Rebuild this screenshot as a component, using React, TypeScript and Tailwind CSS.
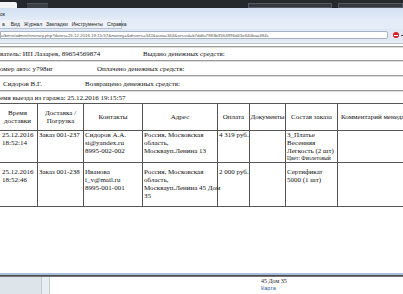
import React from "react";

const Line = () => (
  <div className="h-[2px] border-t border-[#9c9c9c] bg-[#dcdcdc]" />
);

const App: React.FC = () => {
  return (
    <div className="w-[403px] h-[294px] overflow-hidden bg-white flex flex-col font-['Liberation_Sans',sans-serif]">
      {/* dark top bar */}
      <div className="h-[8px] bg-[#25292e] flex items-end relative">
        <div className="w-[17px] h-[6px] bg-[#f2f4f6] rounded-tr-[2px]" />
        <div className="ml-[10px] w-[21px] h-[5px] bg-[#3c4148] border-t border-[#50565e]" />
        <div className="ml-[200px] w-[84px] h-[5px] bg-[#34383e] border border-[#555b63]" />
        <div className="ml-[6px] flex-1 h-[5px] bg-[#34383e] border border-[#555b63]" />
      </div>

      {/* title bar */}
      <div className="h-[12px] bg-gradient-to-b from-[#d3e1f1] to-[#e3ecf7] flex items-center">
        <span className="text-[5px] leading-[6px] text-[#222]">ок</span>
      </div>

      {/* menu */}
      <div className="h-[9px] bg-[#e3ecf7] flex">
        <div className="w-[122px] bg-[#eef2f8] border-r border-b border-[#b6c3d3] flex items-center gap-[4px] pl-[2px] text-[5px] leading-[6px] text-[#222] whitespace-nowrap">
          <span>а</span>
          <span className="ml-[2px]">Вид</span>
          <span>Журнал</span>
          <span>Закладки</span>
          <span>Инструменты</span>
          <span>Справка</span>
        </div>
      </div>

      {/* address bar */}
      <div className="h-[12px] bg-[#dfe8f3] flex items-center">
        <div className="w-[388px] h-[8px] bg-white border border-[#a5b3c4] rounded-r-[2px] flex items-center overflow-hidden">
          <span className="text-[4.4px] leading-[5px] text-[#555] whitespace-nowrap">
            u/bitrix/admin/itinerary.php?dates=25.12.2016 19:15:57&amp;money=&amp;drivers=342&amp;auto=344&amp;sessid=b7ddfa7983b3564996d43e640baa384c
          </span>
        </div>
        <div className="ml-[5px] w-[6px] h-[6px] rounded-full bg-[#d8202a] flex items-center justify-center">
          <div className="w-[4px] h-[1px] bg-white" />
        </div>
        <div className="ml-[2px] w-[2px] h-[1px] bg-[#444]" />
      </div>

      <div className="h-[3px] bg-[#e8eef5] border-b border-[#b9c2cc]" />

      {/* page */}
      <div className="h-[229px] overflow-hidden pt-[2px] font-['Liberation_Serif',serif] text-[7px] leading-[8px] text-[#111]">
        <Line />
        <div className="h-[12px] flex items-center whitespace-nowrap">
          <div className="w-[143px]">ватель: ИП Лазарев, 89654569874</div>
          <div>Выдано денежных средств:</div>
        </div>
        <Line />
        <div className="h-[13px] flex items-center whitespace-nowrap">
          <div className="w-[97px]">омер авто: у798нг</div>
          <div>Оплачено денежных средств:</div>
        </div>
        <Line />
        <div className="h-[13px] flex items-center whitespace-nowrap">
          <div className="w-[85px] pl-[3px]">Сидоров В.Г.</div>
          <div>Возвращено денежных средств:</div>
        </div>
        <Line />
        <div className="h-[11px] flex items-center whitespace-nowrap">
          емя выезда из гаража: 25.12.2016 19:15:57
        </div>

        <table className="-ml-[3px] table-fixed border-collapse w-[466px]">
          <thead>
            <tr className="h-[27px]">
              <th className="w-[40px] border border-[#555] font-normal text-center align-middle">Время доставки</th>
              <th className="w-[46px] border border-[#555] font-normal text-center align-middle">Доставка / Погрузка</th>
              <th className="w-[59px] border border-[#555] font-normal text-center align-middle">Контакты</th>
              <th className="w-[75px] border border-[#555] font-normal text-center align-middle">Адрес</th>
              <th className="w-[32px] border border-[#555] font-normal text-center align-middle">Оплата</th>
              <th className="w-[36px] border border-[#555] font-normal text-center align-middle whitespace-nowrap">Документы</th>
              <th className="w-[52px] border border-[#555] font-normal text-center align-middle">Состав заказа</th>
              <th className="w-[126px] border border-[#555] font-normal text-left pl-[3px] align-middle whitespace-nowrap">Комментарий менеджера</th>
            </tr>
          </thead>
          <tbody>
            <tr className="h-[32px]">
              <td className="border border-[#555] align-top pl-[4px]">25.12.2016<br />18:52:14</td>
              <td className="border border-[#555] align-top pl-[1px] whitespace-nowrap">Заказ 001-237</td>
              <td className="border border-[#555] align-top pl-[1px]">Сидоров А.А.<br />si@yandex.ru<br />8995-002-002</td>
              <td className="border border-[#555] align-top pl-[1px]">Россия, Московская область,<br />Москвауп.Ленина 13</td>
              <td className="border border-[#555] align-top pl-[1px] whitespace-nowrap">4 319 руб.</td>
              <td className="border border-[#555] align-top" />
              <td className="border border-[#555] align-top pl-[1px]">
                3_Платье Весенняя Легкость (2 шт)
                <div className="text-[5.5px] leading-[7px]">Цвет: Фиолетовый</div>
              </td>
              <td className="border border-[#555] align-top" />
            </tr>
            <tr className="h-[44px]">
              <td className="border border-[#555] align-top pl-[4px] pt-[5px]">25.12.2016<br />18:52:46</td>
              <td className="border border-[#555] align-top pl-[1px] pt-[5px] whitespace-nowrap">Заказ 001-238</td>
              <td className="border border-[#555] align-top pl-[1px] pt-[5px]">Иванова<br />i_v@mail.ru<br />8995-001-001</td>
              <td className="border border-[#555] align-top pl-[1px] pt-[5px]">
                Россия, Московская область,
                <div className="whitespace-nowrap">Москвауп.Ленина 45 Дом</div>
                35
              </td>
              <td className="border border-[#555] align-top pl-[1px] pt-[5px] whitespace-nowrap">2 000 руб.</td>
              <td className="border border-[#555] align-top" />
              <td className="border border-[#555] align-top pl-[1px] pt-[5px]">Сертификат 5000 (1 шт)</td>
              <td className="border border-[#555] align-top" />
            </tr>
          </tbody>
        </table>
      </div>

      {/* window bottom edge */}
      <div className="h-[2px] bg-[#a9c1df]" />
      <div className="h-[2px] bg-gradient-to-b from-[#3a3a3a] to-[#8a8a8a]" />
      <div className="flex-1 flex">
        <div className="w-[41px] bg-[#dde5ea]" />
        <div className="w-[9px] bg-[#e8eef1] border-l border-r border-[#c3cdd3]" />
        <div className="flex-1 bg-white pl-[211px] pt-[1px]">
          <div className="font-['Liberation_Serif',serif] text-[6px] leading-[7px] text-[#222]">45 Дом 35</div>
          <div className="text-[5.5px] leading-[7px] text-[#2f5ca8]">Карта</div>
        </div>
      </div>
    </div>
  );
};

export default App;
